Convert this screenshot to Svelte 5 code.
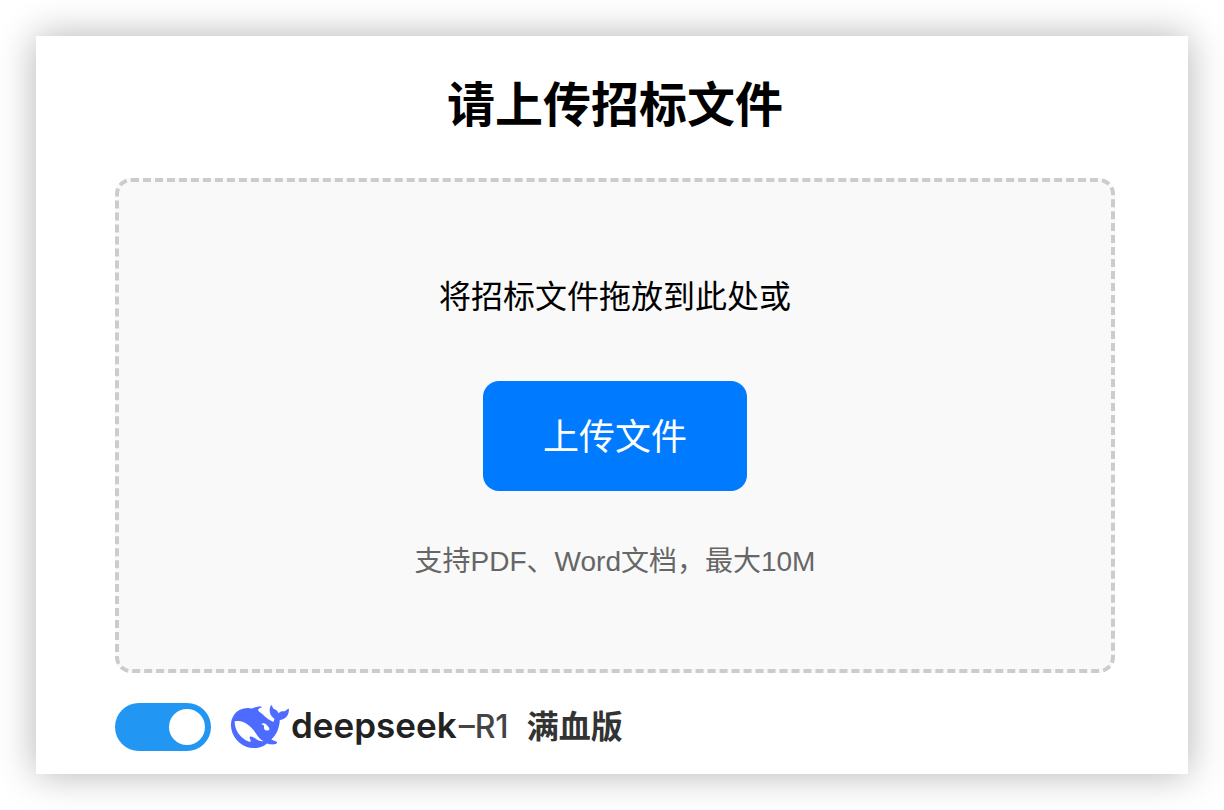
<script>
    let useDeepseek = true;
    let dragging = false;
    let fileInput;
    let fileName = '';

    function openPicker() {
        fileInput.click();
    }

    function onSelect(e) {
        setFile(e.target.files[0]);
    }

    function onDrop(e) {
        dragging = false;
        setFile(e.dataTransfer.files[0]);
    }

    function setFile(file) {
        if (!file) return;
        fileName = file.name;
    }
</script>

<main class="card">
    <h1>请上传招标文件</h1>

    <div
        class="dropzone"
        class:dragging
        role="group"
        aria-label="上传文件"
        on:dragover|preventDefault={() => (dragging = true)}
        on:dragleave={() => (dragging = false)}
        on:drop|preventDefault={onDrop}
    >
        <p class="prompt">{fileName || '将招标文件拖放到此处或'}</p>
        <button class="btn-upload" type="button" on:click={openPicker}>上传文件</button>
        <input bind:this={fileInput} type="file" accept=".pdf,.doc,.docx" hidden on:change={onSelect} />
        <p class="hint">支持PDF、Word文档，最大10M</p>
    </div>

    <label class="model">
        <input class="switch" type="checkbox" bind:checked={useDeepseek} />
        <span class="brand">
            <svg class="whale" viewBox="0 3 24 18" aria-hidden="true">
                <path d="M23.748 4.482c-.254-.124-.364.113-.512.234-.051.039-.094.09-.137.136-.372.397-.806.657-1.373.626-.829-.046-1.537.214-2.163.848-.133-.782-.575-1.248-1.247-1.548-.352-.156-.708-.311-.955-.65-.172-.241-.219-.51-.305-.774-.055-.16-.11-.323-.293-.35-.2-.031-.278.136-.356.276-.313.572-.434 1.202-.422 1.84.027 1.436.633 2.58 1.838 3.393.137.093.172.187.129.323-.082.28-.18.552-.266.833-.055.179-.137.217-.329.14-1.700-.700-3-1.900-4.300-3.100-1.300-1-2-1.300-1.800-1.900.2-.5.8-.8 1.400-.900.3-.1.1-.4-.779-.428-.872.004-1.670.295-2.687.684a3.055 3.055 0 01-.465.137 9.597 9.597 0 00-2.883-.102c-1.885.21-3.390 1.102-4.497 2.623C.082 8.606-.231 10.684.152 12.850c.403 2.284 1.569 4.175 3.360 5.653 1.858 1.533 3.997 2.284 6.438 2.140 1.482-.085 3.133-.284 4.994-1.860.470.234.962.327 1.780.397.630.059 1.236-.030 1.705-.128.735-.156.684-.837.419-.961-2.155-1.004-1.682-.595-2.113-.926 1.096-1.296 2.746-2.642 3.392-7.003.050-.347.007-.565 0-.845-.004-.170.035-.237.230-.256a4.173 4.173 0 001.545-.475c1.396-.763 1.960-2.015 2.093-3.517.020-.230-.004-.467-.247-.588z" />
                <path class="belly" d="M1.500 9.700C3.200 9.200 5 9.700 6.600 10.800c1.500 1.100 2.800 2.400 3.800 4 .8 1.300 1.700 2.400 3 3.100-1.200.1-2.100-.3-2.900-.8-.9-.7-1.600-1.200-2.300-1.200-.6 0-.6.5-.3 1.200.4.600.4 1-.1 1-.7 0-1.700-.5-2.500-1.200C2.900 15.100 1.600 12.700 1.500 9.700z" />
                <path class="belly" d="M12.700 10.700c.5-.4 1.300-.3 1.800.2.700.7 1.200 1.200 1.400 1.900 0 .3-.1.400-.4.500-.7.2-1.300.1-1.700-.4-.2-.3-.2-.6-.1-1 .1-.5-.4-.8-1-.9z" />
            </svg>
            <span class="wordmark">deepseek<span class="version">–R1</span></span>
        </span>
        <span class="edition">满血版</span>
    </label>
</main>

<style>
    :global(body) {
        background: #fff;
        font-family: "Liberation Sans", "Noto Sans CJK SC", sans-serif;
    }

    .card {
        box-sizing: border-box;
        margin: 36px;
        padding: 34px 73px 23px 79px;
        background: #fff;
        box-shadow: 0 0 36px rgba(0, 0, 0, .3);
    }

    h1 {
        margin: 0 0 36px;
        font-size: 48px;
        line-height: 72px;
        font-weight: 700;
        text-align: center;
        color: #000;
    }

    /* Drop area */
    .dropzone {
        display: flex;
        flex-direction: column;
        align-items: center;
        padding: 91px 24px 86px;
        border: 4px dashed #ccc;
        border-radius: 16px;
        background: #f9f9f9;
        text-align: center;
    }

    .dropzone.dragging {
        border-color: #007bff;
    }

    .prompt {
        margin: 0 0 60px;
        font-size: 32px;
        line-height: 48px;
        color: #000;
    }

    .btn-upload {
        margin: 0 0 50px;
        padding: 30px 60px 26px;
        border: 0;
        border-radius: 16px;
        background: #007bff;
        color: #fff;
        font-family: inherit;
        font-size: 36px;
        line-height: 54px;
        cursor: pointer;
    }

    .hint {
        margin: 0;
        font-size: 28px;
        line-height: 42px;
        color: #666;
    }

    /* Model switch */
    .model {
        display: flex;
        align-items: center;
        width: fit-content;
        margin-top: 30px;
        cursor: pointer;
    }

    .switch {
        appearance: none;
        display: flex;
        align-items: center;
        box-sizing: border-box;
        width: 96px;
        height: 48px;
        margin: 0 20px 0 0;
        padding: 6px;
        border-radius: 24px;
        background: #ccc;
        cursor: pointer;
    }

    .switch::before {
        content: "";
        width: 36px;
        height: 36px;
        border-radius: 50%;
        background: #fff;
    }

    .switch:checked {
        justify-content: flex-end;
        background: #2196f3;
    }

    .brand {
        display: flex;
        align-items: center;
        gap: 2px;
        margin-right: 18px;
    }

    .whale {
        width: 58px;
        height: 44px;
        fill: #4d6bfe;
    }

    .whale .belly {
        fill: #fff;
    }

    .wordmark {
        padding-bottom: 2px;
        font-family: Inter, "Liberation Sans", sans-serif;
        font-size: 35px;
        line-height: 40px;
        font-weight: 600;
        color: #222;
    }

    .version {
        margin-left: 2px;
        font-size: 32px;
        font-weight: 500;
        color: #444;
    }

    .edition {
        font-size: 32px;
        line-height: 48px;
        font-weight: 700;
        color: #333;
    }
</style>
